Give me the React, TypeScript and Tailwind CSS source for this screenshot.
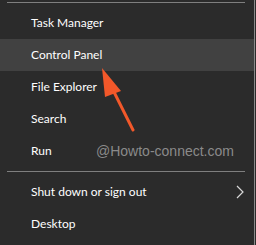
import React from 'react';

const topItems = ['Task Manager', 'Control Panel', 'File Explorer', 'Search', 'Run'];

function Row({ label, active, chevron }: { label: string; active?: boolean; chevron?: boolean }) {
  return (
    <div
      className={`h-[32px] flex items-center justify-between pl-[31px] pr-[10px] text-[12px] text-white ${
        active ? 'bg-[#414141]' : ''
      }`}
    >
      <span>{label}</span>
      {chevron && (
        <svg width="8" height="14" viewBox="0 0 8 14">
          <polyline points="1,1 7,7 1,13" fill="none" stroke="#d8d8d8" strokeWidth="1.2" />
        </svg>
      )}
    </div>
  );
}

export default function App() {
  return (
    <div className="w-[256px] h-[245px] bg-[#2b2b2b] overflow-hidden" style={{ fontFamily: 'Lato, "Noto Sans", sans-serif' }}>
      <div className="relative w-[255px] h-[245px] border-r border-[#8a8a8a] flex flex-col">
        <div className="pt-[2px]">
          <div className="ml-[7px] w-[238px] h-px bg-[#7f7f7f]" />
        </div>
        <div className="pt-[4px]">
          {topItems.map((t) => (
            <Row key={t} label={t} active={t === 'Control Panel'} />
          ))}
        </div>
        <div className="pt-[4px]">
          <div className="ml-[7px] w-[238px] h-px bg-[#7f7f7f]" />
        </div>
        <div className="pt-[4px]">
          <Row label="Shut down or sign out" chevron />
          <Row label="Desktop" />
        </div>

        {/* watermark */}
        <div
          className="absolute left-[96px] top-[141px] whitespace-nowrap text-[14px] text-[#8a8a8a]"
          style={{ fontFamily: '"Liberation Sans", Arial, sans-serif' }}
        >
          @Howto-connect.com
        </div>

        {/* annotation arrow */}
        <svg className="absolute left-0 top-0" width="254" height="245" viewBox="0 0 254 245">
          <line x1="133" y1="130" x2="111" y2="86" stroke="#f2582a" strokeWidth="3" strokeLinecap="round" />
          <polygon points="102,68 105,97 121,91" fill="#f2582a" />
        </svg>
      </div>
    </div>
  );
}
